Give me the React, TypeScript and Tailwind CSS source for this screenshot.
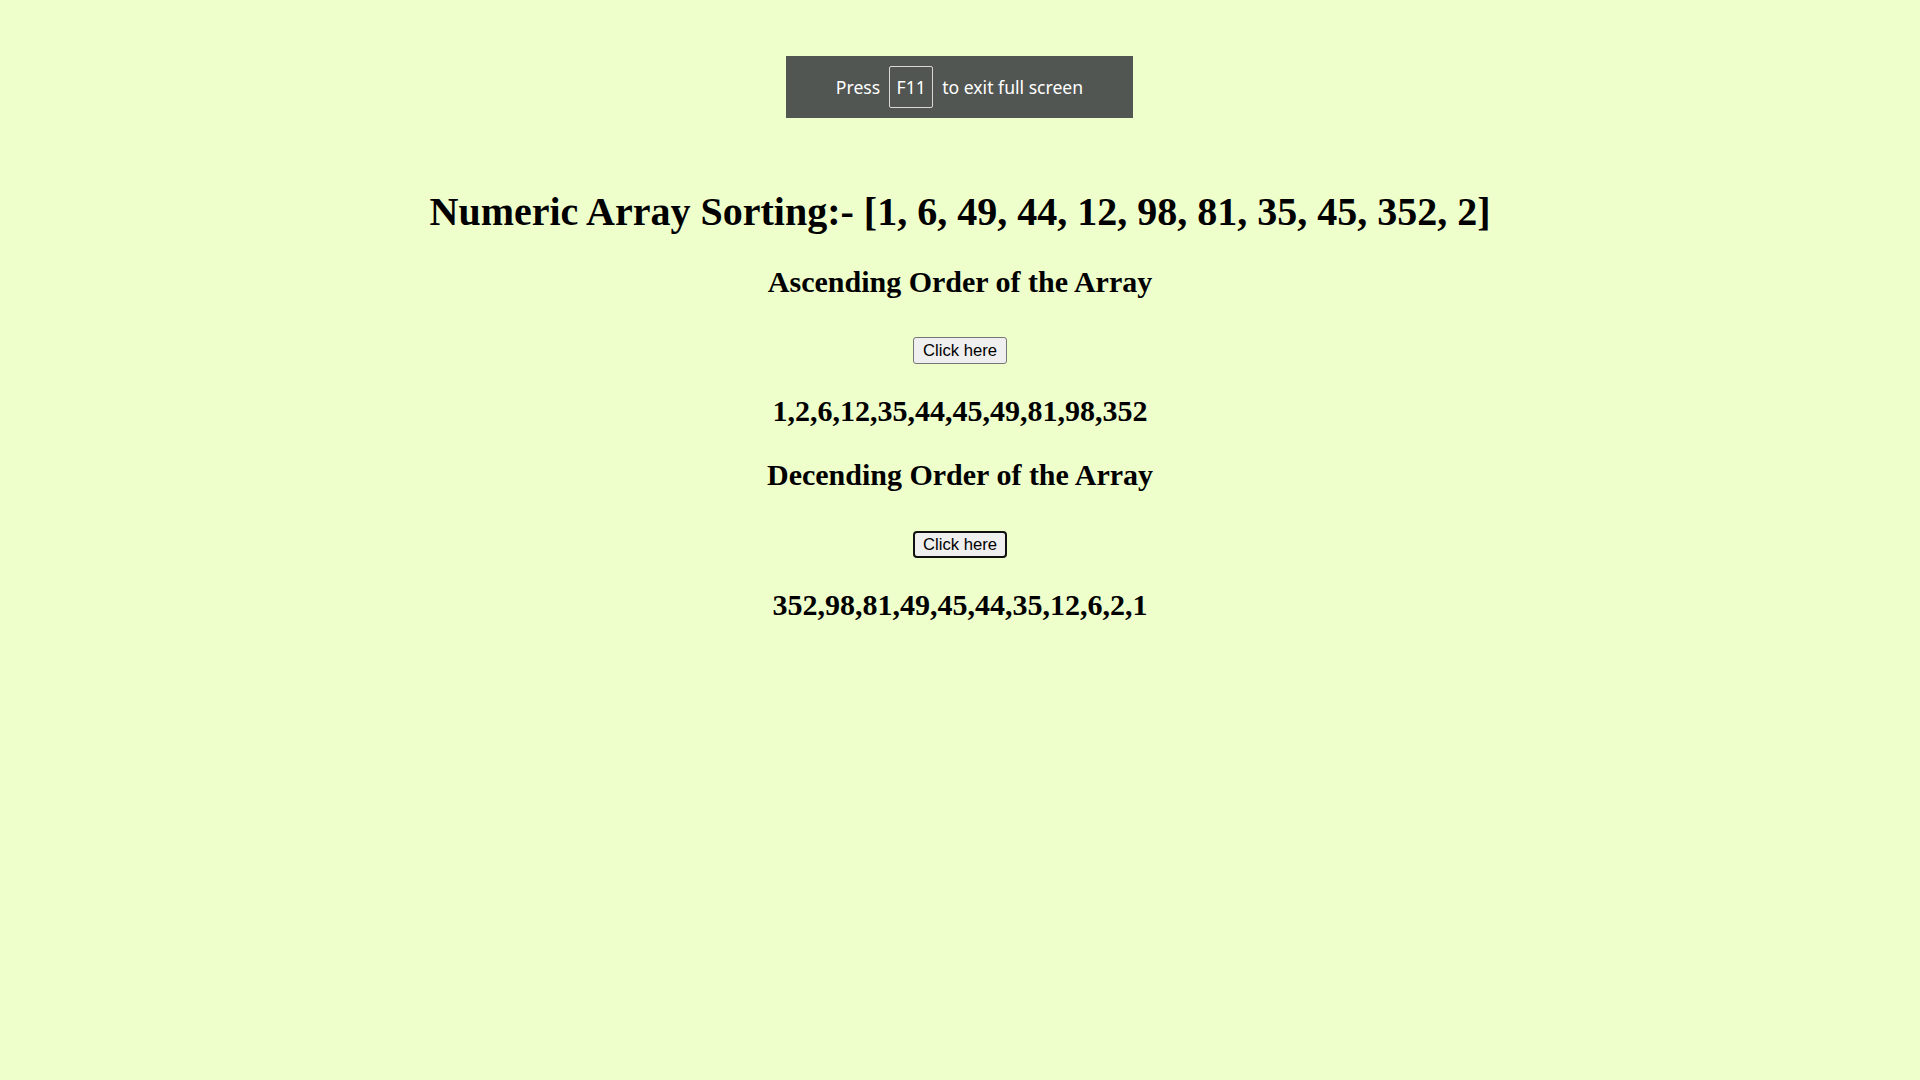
import React from "react";

export default function App() {
  const arr = [1, 6, 49, 44, 12, 98, 81, 35, 45, 352, 2];
  const asc = [...arr].sort((a, b) => a - b);
  const desc = [...arr].sort((a, b) => b - a);
  const serif = { fontFamily: '"Liberation Serif", "Times New Roman", serif' };
  return (
    <div className="relative min-h-[1080px] w-full bg-[#eeffcc] text-black" style={serif}>
      <div className="absolute left-[786px] top-[56px] flex h-[62px] w-[347px] items-center justify-center gap-[9px] bg-[#525652] text-[17.6px] text-white [font-family:'Noto_Sans','Open_Sans',sans-serif]">
        <span>Press</span>
        <span className="flex h-[42px] w-[44px] items-center justify-center rounded-[2px] border border-[#d8d8d8]">F11</span>
        <span>to exit full screen</span>
      </div>
      <div className="flex flex-col items-center pt-[189px]">
        <h1 className="text-[40px] font-bold leading-[46px]">
          Numeric Array Sorting:- [{arr.join(", ")}]
        </h1>
        <h2 className="mt-[29px] text-[30px] font-bold leading-[35px]">Ascending Order of the Array</h2>
        <button className="mt-[38px] flex h-[27px] w-[94px] items-center justify-center rounded-[3px] border border-[#767676] bg-[#efefef] text-[16.67px] text-black [font-family:'Liberation_Sans',Arial,sans-serif]">
          Click here
        </button>
        <h2 className="mt-[29px] text-[30px] font-bold leading-[35px]">{asc.join(",")}</h2>
        <h2 className="mt-[29px] text-[30px] font-bold leading-[35px]">Decending Order of the Array</h2>
        <button className="mt-[39px] flex h-[27px] w-[94px] items-center justify-center rounded-[4px] border-2 border-[#101010] bg-[#efefef] text-[16.67px] text-black [font-family:'Liberation_Sans',Arial,sans-serif]">
          Click here
        </button>
        <h2 className="mt-[29px] text-[30px] font-bold leading-[35px]">{desc.join(",")}</h2>
      </div>
    </div>
  );
}
